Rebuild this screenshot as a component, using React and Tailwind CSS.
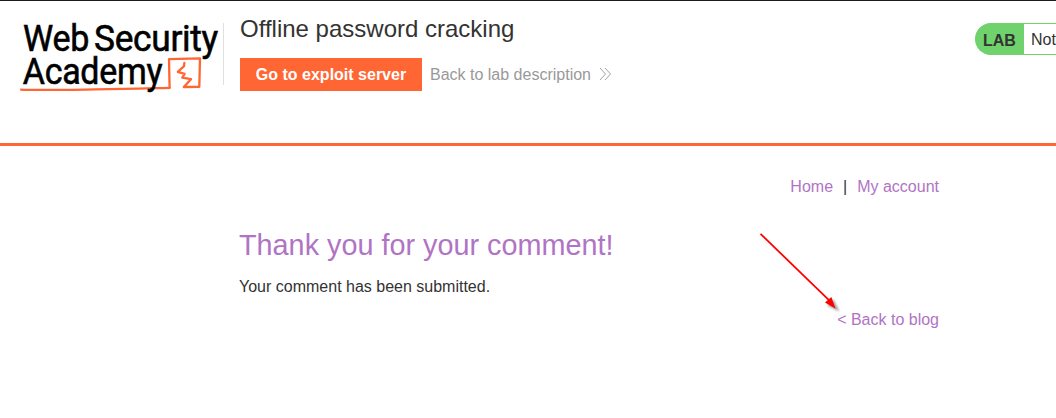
function Logo() {
  return (
    <svg className="block h-[84px] w-[223px] shrink-0 overflow-visible" viewBox="0 0 223 84" role="img" aria-label="Web Security Academy">
      <g fill="none" stroke="#ff6633" strokeLinejoin="round" strokeLinecap="round">
        <path d="M21 76.6 C32 77.4 60 76.9 95 76.4 S145 75.4 169.6 74.8" strokeWidth="2.2" />
        <path d="M169.6 74.8 L169 46.2 L200 45.4 L199.3 73.8 L183.8 74 L191 66.2 L182.3 64.6 L184.6 60.8 L177.8 58.8 L184 53.2 L184.4 50" strokeWidth="2.3" />
      </g>
      <g fill="#000" stroke="#000" strokeWidth="0.6" letterSpacing="-0.3" className="font-['Roboto'] text-[37px] font-normal">
        <text x="23" y="38.4" textLength="66" lengthAdjust="spacingAndGlyphs">Web</text>
        <text x="94" y="38.4" textLength="124" lengthAdjust="spacingAndGlyphs">Security</text>
        <text x="22.8" y="70.8" textLength="139.5" lengthAdjust="spacingAndGlyphs">Academy</text>
      </g>
    </svg>
  );
}

function Header() {
  return (
    <header className="flex h-[146px] items-start border-t border-b-[3px] border-t-[#1b1a1c] border-b-[#ff6633] pt-3">
      <Logo />
      <div className="mt-[10px] h-[62px] w-px shrink-0 bg-[#e0e0e0]" />
      <div className="ml-4 flex-1">
        <h2 className="text-[24px] leading-[32px]">Offline password cracking</h2>
        <div className="mt-[13px] flex items-center">
          <a className="flex h-[33px] w-[182px] items-center justify-center bg-[#ff6633] font-bold text-white">Go to exploit server</a>
          <a className="ml-2 flex items-center text-[#999999]">
            Back to lab description
            <svg className="-mt-px ml-[8px] h-[14px] w-[13px]" viewBox="0 0 13 14" fill="none" stroke="#999999" strokeWidth="0.9">
              <path d="M1 1 L6.5 7 L1 13 M6 1 L11.5 7 L6 13" />
            </svg>
          </a>
        </div>
      </div>
      <div className="mt-[10px] flex h-8 w-[81px] shrink-0 overflow-hidden rounded-l-2xl border border-r-0 border-[#6fd26c] bg-[#6fd26c]">
        <span className="w-12 shrink-0 pl-[7px] font-bold leading-[33px]">LAB</span>
        <span className="grow shrink-0 whitespace-nowrap bg-white pl-[7px] leading-[31px]">Not</span>
      </div>
    </header>
  );
}

export default function App() {
  return (
    <div className="h-[418px] w-[1056px] overflow-hidden bg-white font-['Liberation_Sans',Arial,sans-serif] text-[16px] leading-6 text-[#333332]">
      <Header />
      <main className="relative ml-[239px] w-[700px] pt-[29px]">
        <nav className="flex justify-end text-[#b074c4]">
          <a>Home</a>
          <span className="px-[10px] text-[#333332]">|</span>
          <a>My account</a>
        </nav>
        <h1 className="mt-[27px] text-[28.8px] leading-[38px] text-[#b074c4]">Thank you for your comment!</h1>
        <p className="mt-[11px]">Your comment has been submitted.</p>
        <div className="mt-[9px] flex justify-end text-[#b074c4]">
          <a>&lt; Back to blog</a>
        </div>
        <svg className="absolute left-[519px] top-[84px] h-[84px] w-[84px]" viewBox="0 0 84 84">
          <defs>
            <filter id="shade" x="-30%" y="-30%" width="160%" height="160%">
              <feGaussianBlur stdDeviation="0.8" />
            </filter>
          </defs>
          <path d="M69 75.5 L75.5 69.5 L81.5 81.5 Z" fill="#555" opacity="0.55" filter="url(#shade)" />
          <path d="M2.5 3.8 L72 71.2" stroke="#ff0000" strokeWidth="1.8" />
          <path d="M67 72.6 L73.4 67 L77.6 78.8 Z" fill="#ff0000" />
        </svg>
      </main>
    </div>
  );
}
